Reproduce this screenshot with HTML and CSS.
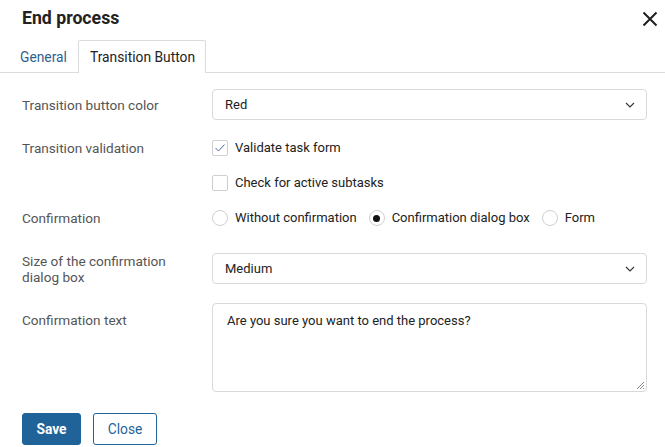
FILE: index.html
```html
<!DOCTYPE html>
<html>
<head>
<meta charset="utf-8">
<link rel="stylesheet" href="styles.css">
</head>
<body>
<div class="dialog">
  <div class="header">
    <h1 class="title">End process</h1>
    <button class="close-x" aria-label="Close">
      <svg width="16" height="16" viewBox="0 0 16 16"><path d="M1.5 1.5 L14.5 14.5 M14.5 1.5 L1.5 14.5" stroke="#1f1f1f" stroke-width="2" fill="none"/></svg>
    </button>
  </div>
  <div class="tabs">
    <div class="tab">General</div>
    <div class="tab active">Transition Button</div>
  </div>
  <div class="form">
    <div class="row r1">
      <div class="label pad8">Transition button color</div>
      <div class="select"><span>Red</span><svg class="chev" width="10" height="6" viewBox="0 0 10 6"><path d="M1 1 L5 5 L9 1" stroke="#333" stroke-width="1.1" fill="none"/></svg></div>
    </div>
    <div class="row r2">
      <div class="label pad2">Transition validation</div>
      <div class="checks">
        <label class="opt"><span class="cb"><svg width="12" height="10" viewBox="0 0 12 10"><path d="M1.5 5 L4.5 8 L10.5 1.5" stroke="#4a6f98" stroke-width="1" fill="none"/></svg></span>Validate task form</label>
        <label class="opt"><span class="cb"></span>Check for active subtasks</label>
      </div>
    </div>
    <div class="row r3">
      <div class="label pad2">Confirmation</div>
      <div class="radios">
        <label class="opt"><span class="rb"></span>Without confirmation</label>
        <label class="opt"><span class="rb on"></span>Confirmation dialog box</label>
        <label class="opt"><span class="rb"></span>Form</label>
      </div>
    </div>
    <div class="row r4">
      <div class="label">Size of the confirmation dialog box</div>
      <div class="select"><span>Medium</span><svg class="chev" width="10" height="6" viewBox="0 0 10 6"><path d="M1 1 L5 5 L9 1" stroke="#333" stroke-width="1.1" fill="none"/></svg></div>
    </div>
    <div class="row r5">
      <div class="label pad10">Confirmation text</div>
      <div class="textarea">Are you sure you want to end the process?
        <svg class="grip" width="10" height="10" viewBox="0 0 10 10"><path d="M9 2 L2 9 M9 5 L5 9 M9 8 L8 9" stroke="#888" stroke-width="1" fill="none"/></svg>
      </div>
    </div>
    <div class="actions">
      <button class="btn primary">Save</button>
      <button class="btn secondary">Close</button>
    </div>
  </div>
</div>
</body>
</html>
```

FILE: styles.css
```css
* { box-sizing: border-box; }
html, body { margin: 0; padding: 0; background: #fff; }
body {
  font-family: Roboto, "Noto Sans", sans-serif;
  font-size: 13px;
  line-height: 16px;
  color: #222;
  width: 665px;
  height: 447px;
  overflow: hidden;
}
.header {
  display: flex;
  align-items: center;
  justify-content: space-between;
  height: 38px;
  padding: 0 7px 0 22px;
}
.title {
  margin: 0;
  font-size: 17.7px;
  font-weight: 700;
  color: #222;
  line-height: 20px;
  padding-bottom: 2px;
}
.close-x {
  border: 0;
  background: none;
  padding: 0;
  width: 16px;
  height: 16px;
  margin-top: -1px;
  display: flex;
}
.tabs {
  display: flex;
  margin-top: 2px;
  padding-left: 8px;
  border-bottom: 1px solid #dcdcdc;
  height: 33px;
}
.tab {
  padding: 0 10px 0 11px;
  height: 32px;
  display: flex;
  align-items: center;
  color: #2f5f8f;
  font-size: 13.8px;
  border: 1px solid transparent;
  border-bottom: 0;
  border-radius: 2px 2px 0 0;
}
.tab.active {
  color: #222;
  background: #fff;
  border-color: #dcdcdc;
  height: 33px;
  margin-bottom: -1px;
}
.form {
  padding: 16px 18px 0 22px;
}
.row {
  display: grid;
  grid-template-columns: 190px 435px;
}
.label {
  color: #555;
  font-size: 13.6px;
  padding-right: 16px;
}
.pad8 { padding-top: 8px; }
.pad2 { padding-top: 2px; }
.pad10 { padding-top: 9px; }
.r1 { margin-bottom: 18px; }
.r2 { margin-bottom: 15px; }
.r3 { margin-bottom: 25px; }
.r4 { margin-bottom: 18px; }
.r5 { margin-bottom: 21px; }
.select {
  height: 31px;
  border: 1px solid #d9d9d9;
  border-radius: 4px;
  display: flex;
  align-items: center;
  justify-content: space-between;
  padding: 0 11px 0 12px;
  color: #222;
}
.chev { margin-top: 1px; }
.checks {
  display: flex;
  flex-direction: column;
  gap: 15px;
}
.opt {
  display: flex;
  align-items: center;
  height: 20px;
  color: #222;
}
.cb {
  width: 16px;
  height: 16px;
  border: 1px solid #cfcfcf;
  border-radius: 2px;
  margin-right: 7px;
  display: flex;
  align-items: center;
  justify-content: center;
}
.radios {
  display: flex;
  gap: 12px;
}
.rb {
  width: 16px;
  height: 16px;
  border: 1px solid #cfcfcf;
  border-radius: 50%;
  margin-right: 7px;
  display: flex;
  align-items: center;
  justify-content: center;
}
.rb.on::after {
  content: "";
  width: 7px;
  height: 7px;
  border-radius: 50%;
  background: #111;
}
.textarea {
  position: relative;
  height: 89px;
  border: 1px solid #d9d9d9;
  border-radius: 4px;
  padding: 9px 14px;
  color: #222;
}
.grip {
  position: absolute;
  right: 1px;
  bottom: 1px;
}
.actions {
  display: flex;
  gap: 12px;
}
.btn {
  height: 32px;
  border-radius: 3px;
  font-family: inherit;
  font-size: 13.8px;
  padding: 0;
  cursor: pointer;
}
.primary {
  width: 59px;
  background: #1f6399;
  border: 1px solid #1f6399;
  color: #fff;
  font-weight: 700;
}
.secondary {
  width: 64px;
  background: #fff;
  border: 1px solid #1f6399;
  color: #1f6399;
}
```
